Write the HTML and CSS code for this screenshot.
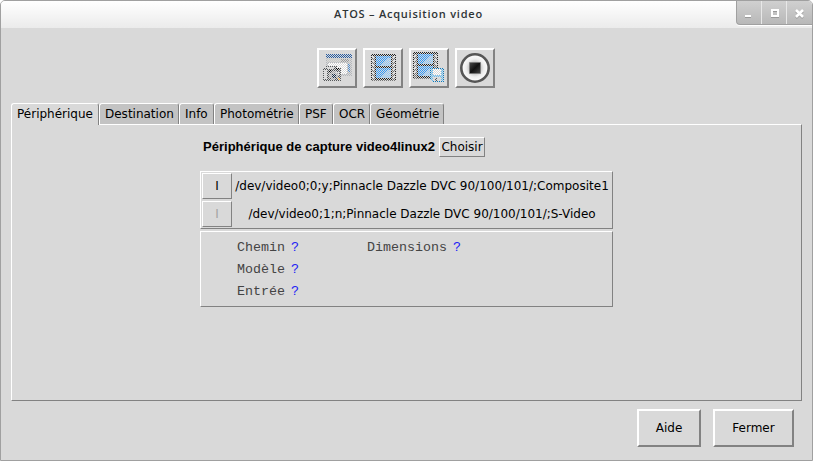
FILE: index.html
```
<!DOCTYPE html>
<html lang="fr">
<head>
<meta charset="utf-8">
<title>ATOS - Acquisition video</title>
<link rel="stylesheet" href="styles.css">
</head>
<body>
<div class="window">
  <header class="titlebar">
    <h1 class="title">ATOS – Acquisition video</h1>
    <div class="controls">
      <span class="control"><svg width="24" height="24" shape-rendering="crispEdges"><path d="M7 14h6v2H7z" fill="#fff"/><path d="M7 16h6v1H7z" fill="#999"/></svg></span>
      <span class="control"><svg width="25" height="24" shape-rendering="crispEdges"><path d="M10 9h6v6h-6z" fill="none" stroke="#999" stroke-width="2" transform="translate(0 1)"/><path d="M10 9h6v6h-6z" fill="none" stroke="#fff" stroke-width="2"/></svg></span>
      <span class="control"><svg width="24" height="24"><path d="M9 10l7 7m0-7l-7 7" stroke="#999" stroke-width="2.500"/><path d="M9 9l7 7m0-7l-7 7" stroke="#fff" stroke-width="2.500"/></svg></span>
    </div>
  </header>

  <div class="toolbar">
    <button class="tool"><svg width="36" height="36" shape-rendering="crispEdges">
      <defs><pattern id="stipple" width="2" height="2" patternUnits="userSpaceOnUse"><path d="M0 0h1v1H0zM1 1h1v1H1z" fill="#d9d9d9"/></pattern></defs>
      <path d="M7 4h26v22H7z" fill="#b4b7bb"/><path d="M7 4h26v4H7z" fill="#275ba0"/><path d="M8 8h23v4H8z" fill="#c8c9c5"/><path d="M9 13h19v11H9z" fill="#fff"/><path d="M22 9h8v3h-8z" fill="#999"/><path d="M29 14h2v8h-2z" fill="#4b8bd0"/>
      <path d="M4 18h3v-2h11v2h4v13H4z" fill="#55585a"/><path d="M8 17h7v2H8zM5 20h3v9H5zM16 22h4v3h-4z" fill="#ddd"/><path d="M17 18h3v2h-3zM10 20h2v2h-2z" fill="#000"/><path d="M10 23h3v-2h4v2h2v5h-3v2h-4v-2h-2z" fill="#a8a8a8"/><path d="M13 24h4v4h-4z" fill="#182d45"/><path d="M19 28h2v2h-2z" fill="#f6a020"/>
      <path d="M3 3h31v29H3z" fill="url(#stipple)"/></svg></button>
    <button class="tool"><svg width="36" height="36" shape-rendering="crispEdges">
      <path d="M6 4h25v27H6z" fill="#777"/><path d="M6 4h1v27H6zM10 4h1v27h-1zM26 4h1v27h-1zM30 4h1v27h-1zM6 4h25v2H6zM10 16h17v2H10zM10 28h17v2H10z" fill="#222"/>
      <path d="M7 6h2v2H7zM7 10h2v2H7zM7 14h2v2H7zM7 18h2v2H7zM7 22h2v2H7zM7 26h2v2H7zM28 6h2v2h-2zM28 10h2v2h-2zM28 14h2v2h-2zM28 18h2v2h-2zM28 22h2v2h-2zM28 26h2v2h-2z" fill="#ddd"/>
      <path d="M11 6h15v10H11zM11 18h15v10H11z" fill="#2f98fa"/><path d="M14 16l10-8h2v8zM14 28l10-8h2v8z" fill="#8cc6fa"/>
      <path d="M6 3h25v29H6z" fill="url(#stipple)"/></svg></button>
    <button class="tool"><svg width="36" height="36" shape-rendering="crispEdges">
      <path d="M2 2h25v27H2z" fill="#777"/><path d="M2 2h1v27H2zM6 2h1v27H6zM22 2h1v27h-1zM26 2h1v27h-1zM2 2h25v2H2zM6 14h17v2H6zM6 26h17v2H6z" fill="#222"/>
      <path d="M3 5h2v2H3zM3 9h2v2H3zM3 13h2v2H3zM3 17h2v2H3zM3 21h2v2H3zM24 5h2v2h-2zM24 9h2v2h-2zM24 13h2v2h-2z" fill="#ddd"/>
      <path d="M7 4h15v10H7zM7 16h15v10H7z" fill="#2f98fa"/><path d="M10 14l10-8h2v8zM10 26l10-8h2v8z" fill="#8cc6fa"/>
      <path d="M19 18h13l1 2v12H21l-2-2z" fill="#0878bd"/><path d="M20 19h12v12H20z" fill="#62bef5"/><path d="M22 19h8v6h-8z" fill="#fff"/><path d="M22 27h8v4h-8z" fill="#ddd"/><path d="M24 28h2v3h-2z" fill="#555"/>
      <path d="M2 2h32v31H2z" fill="url(#stipple)"/></svg></button>
    <button class="tool"><svg width="36" height="36">
      <defs><radialGradient id="disc"><stop offset=".35" stop-color="#bdbdbd"/><stop offset=".65" stop-color="#eee"/><stop offset="1" stop-color="#fff"/></radialGradient><linearGradient id="stop" x2="1" y2="1"><stop stop-color="#4a4a4a"/><stop offset=".5" stop-color="#111"/><stop offset="1" stop-color="#444"/></linearGradient></defs>
      <circle cx="18" cy="18" r="13.700" fill="url(#disc)" stroke="#565656" stroke-width="2.600"/><path d="M12.500 12.500h11v11h-11z" fill="url(#stop)" stroke="#777" stroke-width=".6"/></svg></button>
  </div>

  <nav class="tabs">
    <span class="tab active w-peri">Périphérique</span><span class="tab w-dest">Destination</span><span class="tab w-info">Info</span><span class="tab w-photo">Photométrie</span><span class="tab w-psf">PSF</span><span class="tab w-ocr">OCR</span><span class="tab w-geo">Géométrie</span>
  </nav>
  <main class="panel">
    <div class="heading"><h2>Périphérique de capture video4linux2</h2><button class="choose">Choisir</button></div>
    <section class="devices">
      <div class="device"><button class="pick">I</button><span class="path">/dev/video0;0;y;Pinnacle Dazzle DVC 90/100/101/;Composite1</span></div>
      <div class="device"><button class="pick off">I</button><span class="path">/dev/video0;1;n;Pinnacle Dazzle DVC 90/100/101/;S-Video</span></div>
    </section>
    <section class="details">
      <div>Chemin</div><b>?</b><div>Dimensions</div><b>?</b>
      <div>Modèle</div><b>?</b><i></i><i></i>
      <div>Entrée</div><b>?</b><i></i><i></i>
    </section>
  </main>
  <footer class="actions"><button class="action help">Aide</button><button class="action close">Fermer</button></footer>
</div>
</body>
</html>
```
FILE: styles.css
```
* { box-sizing: border-box; }
html { background: #fff; }
body { margin: 0; }
button { font: inherit; color: inherit; padding: 0; background: #d9d9d9; border: 1px solid; border-color: #fff #828282 #828282 #fff; border-radius: 0; }
svg { display: block; }
.window { width: 813px; height: 461px; overflow: hidden; background: #d9d9d9; border: 1px solid #a0a0a0; border-radius: 5px 5px 0 0; font: 12px/16px "DejaVu Sans", sans-serif; color: #000; }

.titlebar { height: 27px; display: grid; grid-template-columns: 77px 1fr 77px; background: linear-gradient(#fff, #ebebeb); }
.title { grid-column: 2; margin: 0; padding-left: 4px; text-align: center; font: 600 11px/26px "Open Sans", sans-serif; letter-spacing: .77px; color: #2e3436; }
.controls { width: 76px; height: 24px; margin-left: 1px; display: flex; background: linear-gradient(#d0d0d0, #b8b8b8); border: 1px solid #a0a0a0; border-width: 0 0 1px 1px; border-bottom-left-radius: 4px; box-shadow: 0 1px #fff; }
.control { width: 26px; border-left: 1px solid #e8e8e8; overflow: hidden; }
.control:first-child { width: 24px; border-left: 0; padding-left: 1px; }

.toolbar { height: 40px; margin-top: 20px; padding-left: 316px; display: flex; gap: 6px; }
.tool { width: 40px; height: 40px; border-width: 2px; }

.tabs { display: flex; height: 22px; margin: 15px 0 0 10px; align-items: flex-start; position: relative; }
.tab { height: 21px; padding: 3px 0 0 5px; line-height: 15px; white-space: nowrap; background: #c3c3c3; border: 1px solid; border-bottom: 0; border-color: #fff #828282 #fff #fff; border-radius: 3px 3px 0 0; }
.tab.active { background: #d9d9d9; height: 22px; z-index: 1; }
.w-peri { width: 88px; }
.w-dest { width: 80px; }
.w-info { width: 35px; }
.w-photo { width: 85px; }
.w-psf { width: 34px; }
.w-ocr { width: 37px; }
.w-geo { width: 74px; }

.panel { width: 791px; height: 277px; margin: -1px 0 0 10px; padding: 12px 0 0 188px; border: 1px solid; border-color: #fff #828282 #828282 #fff; }
.heading { display: flex; align-items: center; height: 20px; padding-left: 3px; }
.heading h2 { width: 236px; margin: 0; font: bold 13px/16px "Liberation Sans", sans-serif; letter-spacing: .02px; white-space: nowrap; }
.choose { width: 46px; height: 20px; line-height: 16px; }
.devices { width: 413px; height: 58px; margin-top: 14px; padding: 1px; display: flex; flex-direction: column; gap: 2px; border: 1px solid; border-color: #fff #828282 #828282 #fff; }
.device { display: flex; align-items: center; height: 26px; }
.pick { width: 30px; height: 26px; }
.pick.off { color: #a3a3a3; }
.path { flex: 1; padding-left: 1px; text-align: center; white-space: nowrap; }
.details { width: 413px; height: 76px; margin-top: 2px; padding: 5px 0 0 36px; display: grid; grid-template-columns: 54px 76px 86px 1fr; grid-auto-rows: 22px; align-content: start; border: 1px solid; border-color: #fff #828282 #828282 #fff; font: 13.333px/22px "Liberation Mono", monospace; color: #444; }
.details b { font-weight: 400; color: #2222f5; }

.actions { display: flex; gap: 12px; margin: 8px 0 0 636px; }
.action { height: 38px; border-width: 2px; }
.help { width: 64px; }
.close { width: 81px; }
```
